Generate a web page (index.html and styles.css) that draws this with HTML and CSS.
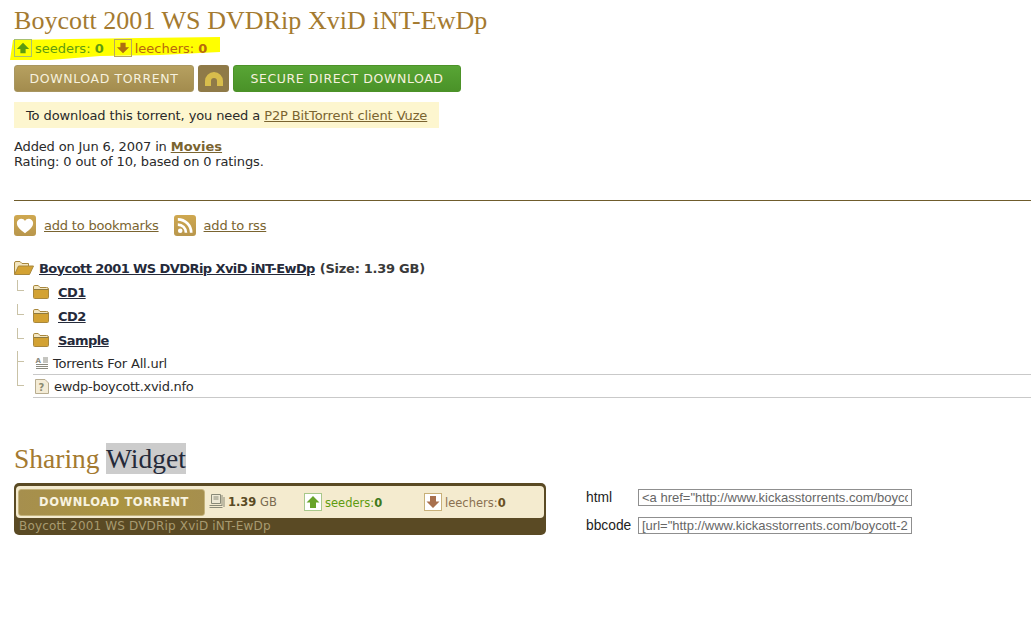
FILE: index.html
```html
<!DOCTYPE html>
<html lang="en">
<head>
<meta charset="utf-8">
<title>Boycott 2001 WS DVDRip XviD iNT-EwDp</title>
<link rel="stylesheet" href="styles.css">
</head>
<body>
<svg width="0" height="0" class="defs">
  <defs>
    <symbol id="folder" viewBox="0 0 16 14">
      <path d="M.5 3V1.8Q.5.5 1.8.5h3.4L7 2.5h6.5Q15.5 2.500 15.5 4v8.500q0 1-1 1h-13q-1 0-1-1z" fill="#f3e6c0" stroke="#a8873c"/>
      <rect x="1" y="4.500" width="14" height="8.500" fill="#d3a233"/>
      <path d="M1 4.500h14" stroke="#8e7a40"/>
    </symbol>
  </defs>
</svg>
<h1 class="title">Boycott 2001 WS DVDRip XviD iNT-EwDp</h1>
<div class="stats">
  <svg class="marker" viewBox="0 0 210 24" aria-hidden="true"><path d="M3 3 60 2 130 1 210 0 210 15 150 18 90 19 40 23 0 23z" fill="#ffff00"/></svg>
  <span class="arrow arrow-up"><svg viewBox="0 0 16 16"><path d="M8 2 15 9H11V14H5V9H1z" fill="#5e9b10"/></svg></span>
  <span class="seed">seeders: <b>0</b></span>
  <span class="arrow arrow-down"><svg viewBox="0 0 16 16"><path d="M8 14 15 7H11V2H5V7H1z" fill="#ae6f10"/></svg></span>
  <span class="leech">leechers: <b>0</b></span>
</div>
<div class="actions">
  <a class="btn btn-tan">DOWNLOAD TORRENT</a>
  <a class="btn-magnet"><svg viewBox="0 0 20 16" width="20" height="16"><path d="M1 15V10A9 9 0 0 1 19 10V15H13V10A3 3 0 0 0 7 10V15z" fill="#d8bd4c"/></svg></a>
  <a class="btn btn-green">SECURE DIRECT DOWNLOAD</a>
</div>
<div class="notice">To download this torrent, you need a <a>P2P BitTorrent client Vuze</a></div>
<p class="meta">Added on Jun 6, 2007 in <a><b>Movies</b></a><br>Rating: 0 out of 10, based on 0 ratings.</p>
<hr class="rule">
<div class="links">
  <span class="link-item"><span class="tile"><svg viewBox="0 0 22 22" width="22" height="21"><path d="M11 19C5.500 15 2.500 12.500 2.500 8.500 2.500 5.800 4.800 4 7.200 4 8.800 4 10.200 4.900 11 6.200 11.800 4.900 13.200 4 14.800 4 17.200 4 19.500 5.800 19.500 8.500 19.500 12.500 16.500 15 11 19z" fill="#fff"/></svg></span><a>add to bookmarks</a></span>
  <span class="link-item"><span class="tile"><svg viewBox="0 0 22 22" width="22" height="21"><circle cx="6" cy="16.500" r="2.400" fill="#fff"/><path d="M3.500 10A8.500 8.500 0 0 1 12 18.500M3.500 4.500A14 14 0 0 1 17.500 18.500" fill="none" stroke="#fff" stroke-width="2.800"/></svg></span><a>add to rss</a></span>
</div>
<ul class="tree">
  <li class="root"><svg class="open" viewBox="0 0 20 14"><path d="M.5 13V2Q.5.500 2 .500h4L8 2.500h6.500V5" fill="#f3e6c0" stroke="#a8873c"/><path d="M.5 13.500 4.500 5H19.500L15.500 13.500z" fill="#d3a233" stroke="#a8873c"/></svg><a>Boycott 2001 WS DVDRip XviD iNT-EwDp</a> <b>(Size: 1.39 GB)</b></li>
  <li class="dir"><svg class="folder"><use href="#folder"/></svg><a>CD1</a></li>
  <li class="dir"><svg class="folder"><use href="#folder"/></svg><a>CD2</a></li>
  <li class="dir"><svg class="folder"><use href="#folder"/></svg><a>Sample</a></li>
  <li class="file first"><svg class="ficon" viewBox="0 0 14 14"><text class="ae" x="0.500" y="6.500">A</text><path d="M8 1.500h5M8 3.500h5M8 5.500h5M1 8h12M1 10h12M1 12h12" stroke="#8a8a80"/></svg><span>Torrents For All.url</span></li>
  <li class="file second"><svg class="ficon" viewBox="0 0 14 15"><path d="M.5.500H10L13.500 4V14.500H.5z" fill="#f4ecd6" stroke="#b8ad90"/><text class="qm" x="3.500" y="11.500">?</text></svg><span>ewdp-boycott.xvid.nfo</span></li>
</ul>
<h2 class="share">Sharing <span class="sel">Widget</span></h2>
<section class="widget-row">
  <div class="widget">
    <div class="w-top">
      <a class="w-btn">DOWNLOAD TORRENT</a>
      <svg class="w-size" viewBox="0 0 16 16"><path d="M2.500.500H11.500V9.500H2.500z" fill="#eee9d5" stroke="#8a8a78"/><path d="M4.500 3h5M4.500 5h5M.5 11.500h13M.5 13.500h13M13 1v10M15 3v10" stroke="#8a8a78"/></svg>
      <span class="w-sz"><b>1.39</b> GB</span>
      <span class="w-cell w-s"><span class="w-arrow wa-up"><svg viewBox="0 0 14 14"><path d="M7 1 13.500 7.500H10V13H4V7.500H.5z" fill="#68a32a"/></svg></span><span class="w-txt">seeders:<b>0</b></span></span>
      <span class="w-cell w-l"><span class="w-arrow wa-down"><svg viewBox="0 0 14 14"><path d="M7 13 13.500 6.500H10V1H4V6.500H.5z" fill="#a8704e"/></svg></span><span class="w-txt">leechers:<b>0</b></span></span>
    </div>
    <div class="w-name">Boycott 2001 WS DVDRip XviD iNT-EwDp</div>
  </div>
  <div class="codes">
    <label class="code"><span>html</span><input readonly value='&lt;a href="http://www.kickasstorrents.com/boycott-2001'></label>
    <label class="code"><span>bbcode</span><input readonly value='[url="http://www.kickasstorrents.com/boycott-2001'></label>
  </div>
</section>
</body>
</html>
```
FILE: styles.css
```css
* { box-sizing: border-box; }
html, body { margin: 0; padding: 0; }
body {
  background: #fff;
  color: #2a2a2a;
  font: 13px/15px "DejaVu Sans", Verdana, sans-serif;
  padding: 0 0 0 14px;
  height: 641px;
  overflow: hidden;
}
.defs { position: absolute; }
a { color: inherit; }
.title {
  margin: 0;
  padding-top: 7px;
  font: 400 26px/28px "Liberation Serif", Georgia, serif;
  letter-spacing: 0.05px;
  font-variant-numeric: oldstyle-nums;
  color: #a47a30;
}
.stats {
  position: relative;
  display: flex;
  align-items: center;
  height: 18px;
  margin-top: 4px;
  font-size: 13px;
}
.marker {
  position: absolute;
  left: -4px;
  top: -2px;
  width: 210px;
  height: 24px;
}
.arrow {
  position: relative;
  width: 18px;
  height: 18px;
  border: 1px solid #a8c070;
  display: flex;
  align-items: center;
  justify-content: center;
}
.arrow svg { width: 14px; height: 14px; }
.arrow-down { border-color: #b8a860; margin-left: 10px; }
.seed, .leech { position: relative; margin-left: 3px; }
.seed { color: #5e9b10; }
.leech { color: #b8680c; }
.actions {
  display: flex;
  gap: 4px;
  margin-top: 8px;
  height: 27px;
}
.btn {
  display: flex;
  align-items: center;
  justify-content: center;
  border-radius: 3px;
  color: #f6f1de;
  letter-spacing: 0.6px;
  font-size: 12.5px;
}
.btn-tan {
  width: 180px;
  background: linear-gradient(#b6a060, #a38c4e);
  border: 1px solid #a89660;
}
.btn-magnet {
  width: 31px;
  display: flex;
  align-items: center;
  justify-content: center;
  border-radius: 3px;
  background: #8f7a48;
}
.btn-green {
  width: 228px;
  background: linear-gradient(#58a535, #4a9228);
  border: 1px solid #4c9228;
}
.notice {
  width: 425px;
  height: 26px;
  margin-top: 10px;
  padding: 1px 0 0 12px;
  background: #fdf6cf;
  line-height: 26px;
  letter-spacing: -0.11px;
}
.notice a { color: #7a6430; text-decoration: underline; }
.meta { margin: 11px 0 0; line-height: 15px; letter-spacing: -0.14px; }
.meta a { color: #7a6430; text-decoration: underline; letter-spacing: 0; }
.rule {
  border: 0;
  height: 1px;
  background: #6f5c2c;
  margin: 31px 0 0;
}
.links {
  display: flex;
  gap: 15px;
  margin-top: 14px;
  height: 21px;
  letter-spacing: -0.2px;
}
.link-item { display: flex; align-items: center; gap: 8px; }
.link-item a { color: #7a6430; text-decoration: underline; margin-top: -1px; }
.tile {
  width: 22px;
  height: 21px;
  border-radius: 3px;
  background: linear-gradient(#cfa850, #b8964c);
  display: block;
}
.tile svg { display: block; }
.tree { list-style: none; margin: 20px 0 0; padding: 0; }
.tree li { position: relative; display: flex; align-items: center; }
.tree a { text-decoration: underline; color: #252a3a; font-weight: 700; letter-spacing: -0.58px; }
.root { height: 24px; gap: 5px; }
.root b { color: #3a3a3a; letter-spacing: -0.27px; }
.open { width: 20px; height: 14px; flex: none; }
.dir { height: 24px; padding-left: 19px; gap: 9px; }
.folder { width: 16px; height: 14px; flex: none; }
.file {
  height: 23px;
  margin-left: 19px;
  gap: 4px;
  border-bottom: 1px solid #c9c9c9;
  letter-spacing: -0.2px;
}
.second { gap: 5px; letter-spacing: -0.28px; }
.ficon { width: 14px; height: 15px; flex: none; margin-left: 2px; }
.ae { font: 700 7px "DejaVu Sans", sans-serif; fill: #8a8a80; }
.qm { font: 700 10px "DejaVu Sans", sans-serif; fill: #8a8a70; }
.dir::before {
  content: "";
  position: absolute;
  left: 3px;
  top: 0;
  width: 6px;
  height: 10px;
  border-left: 1px solid #c9c2a6;
  border-bottom: 1px solid #c9c2a6;
}
.file::before {
  content: "";
  position: absolute;
  left: -16px;
  width: 6px;
  border-left: 1px solid #c9c2a6;
  border-bottom: 1px solid #c9c2a6;
}
.first::before { top: -1px; height: 10px; }
.second::before { top: -23px; height: 33px; }
.share {
  margin: 46px 0 0;
  font: 400 27.5px/30px "Liberation Serif", Georgia, serif;
  color: #a47a30;
}
.sel { background: #cccccc; color: #252a3a; }
.widget-row { display: flex; margin-top: 9px; align-items: flex-start; }
.widget {
  width: 532px;
  height: 52px;
  background: #5a4a24;
  border-radius: 5px;
  padding: 3px 2px 0;
}
.w-top {
  display: flex;
  align-items: center;
  height: 32px;
  padding-left: 2px;
  background: #f4ebcf;
  border-radius: 4px;
  font-size: 11.500px;
  color: #7a6a50;
}
.w-btn {
  width: 187px;
  height: 27px;
  flex: none;
  display: flex;
  align-items: center;
  justify-content: center;
  padding-left: 5px;
  border-radius: 3px;
  background: linear-gradient(90deg, #a68f4e, #ab9440 50%, #a68f4e);
  border: 1px solid #c4b37c;
  color: #f8f3e0;
  font-weight: 700;
  font-size: 11.5px;
  letter-spacing: 0.55px;
}
.w-size { width: 16px; height: 16px; margin-left: 4px; flex: none; }
.w-sz { margin-left: 3px; width: 76px; flex: none; }
.w-sz b { color: #5a4a24; }
.w-cell { display: flex; align-items: center; gap: 3px; flex: none; }
.w-txt { padding-top: 2px; }
.w-s { width: 120px; color: #5e9b10; }
.w-s b { color: #40791a; }
.w-l { color: #8a7050; }
.w-l b { color: #6a5024; }
.w-arrow {
  width: 18px;
  height: 18px;
  display: flex;
  align-items: center;
  justify-content: center;
  border: 1px solid #a8c88a;
  background: #fff;
}
.w-arrow svg { width: 14px; height: 14px; }
.wa-down { border-color: #c8b078; }
.w-name {
  color: #a89a70;
  font-size: 12px;
  line-height: 17px;
  letter-spacing: 0.16px;
  padding-left: 3px;
  white-space: nowrap;
}
.codes {
  margin-left: 40px;
  margin-top: 6px;
  display: flex;
  flex-direction: column;
  gap: 11px;
  font-family: "Liberation Sans", Arial, sans-serif;
}
.code { display: flex; align-items: center; height: 17px; color: #222; font-size: 13.8px; }
.code span { width: 52px; flex: none; }
.code input {
  width: 274px;
  height: 17px;
  padding: 0 3px;
  margin: 0;
  border: 1px solid #8f8f8f;
  border-radius: 0;
  background: #fff;
  color: #666;
  font: 13px "Liberation Sans", Arial, sans-serif;
  outline: 0;
}
```
